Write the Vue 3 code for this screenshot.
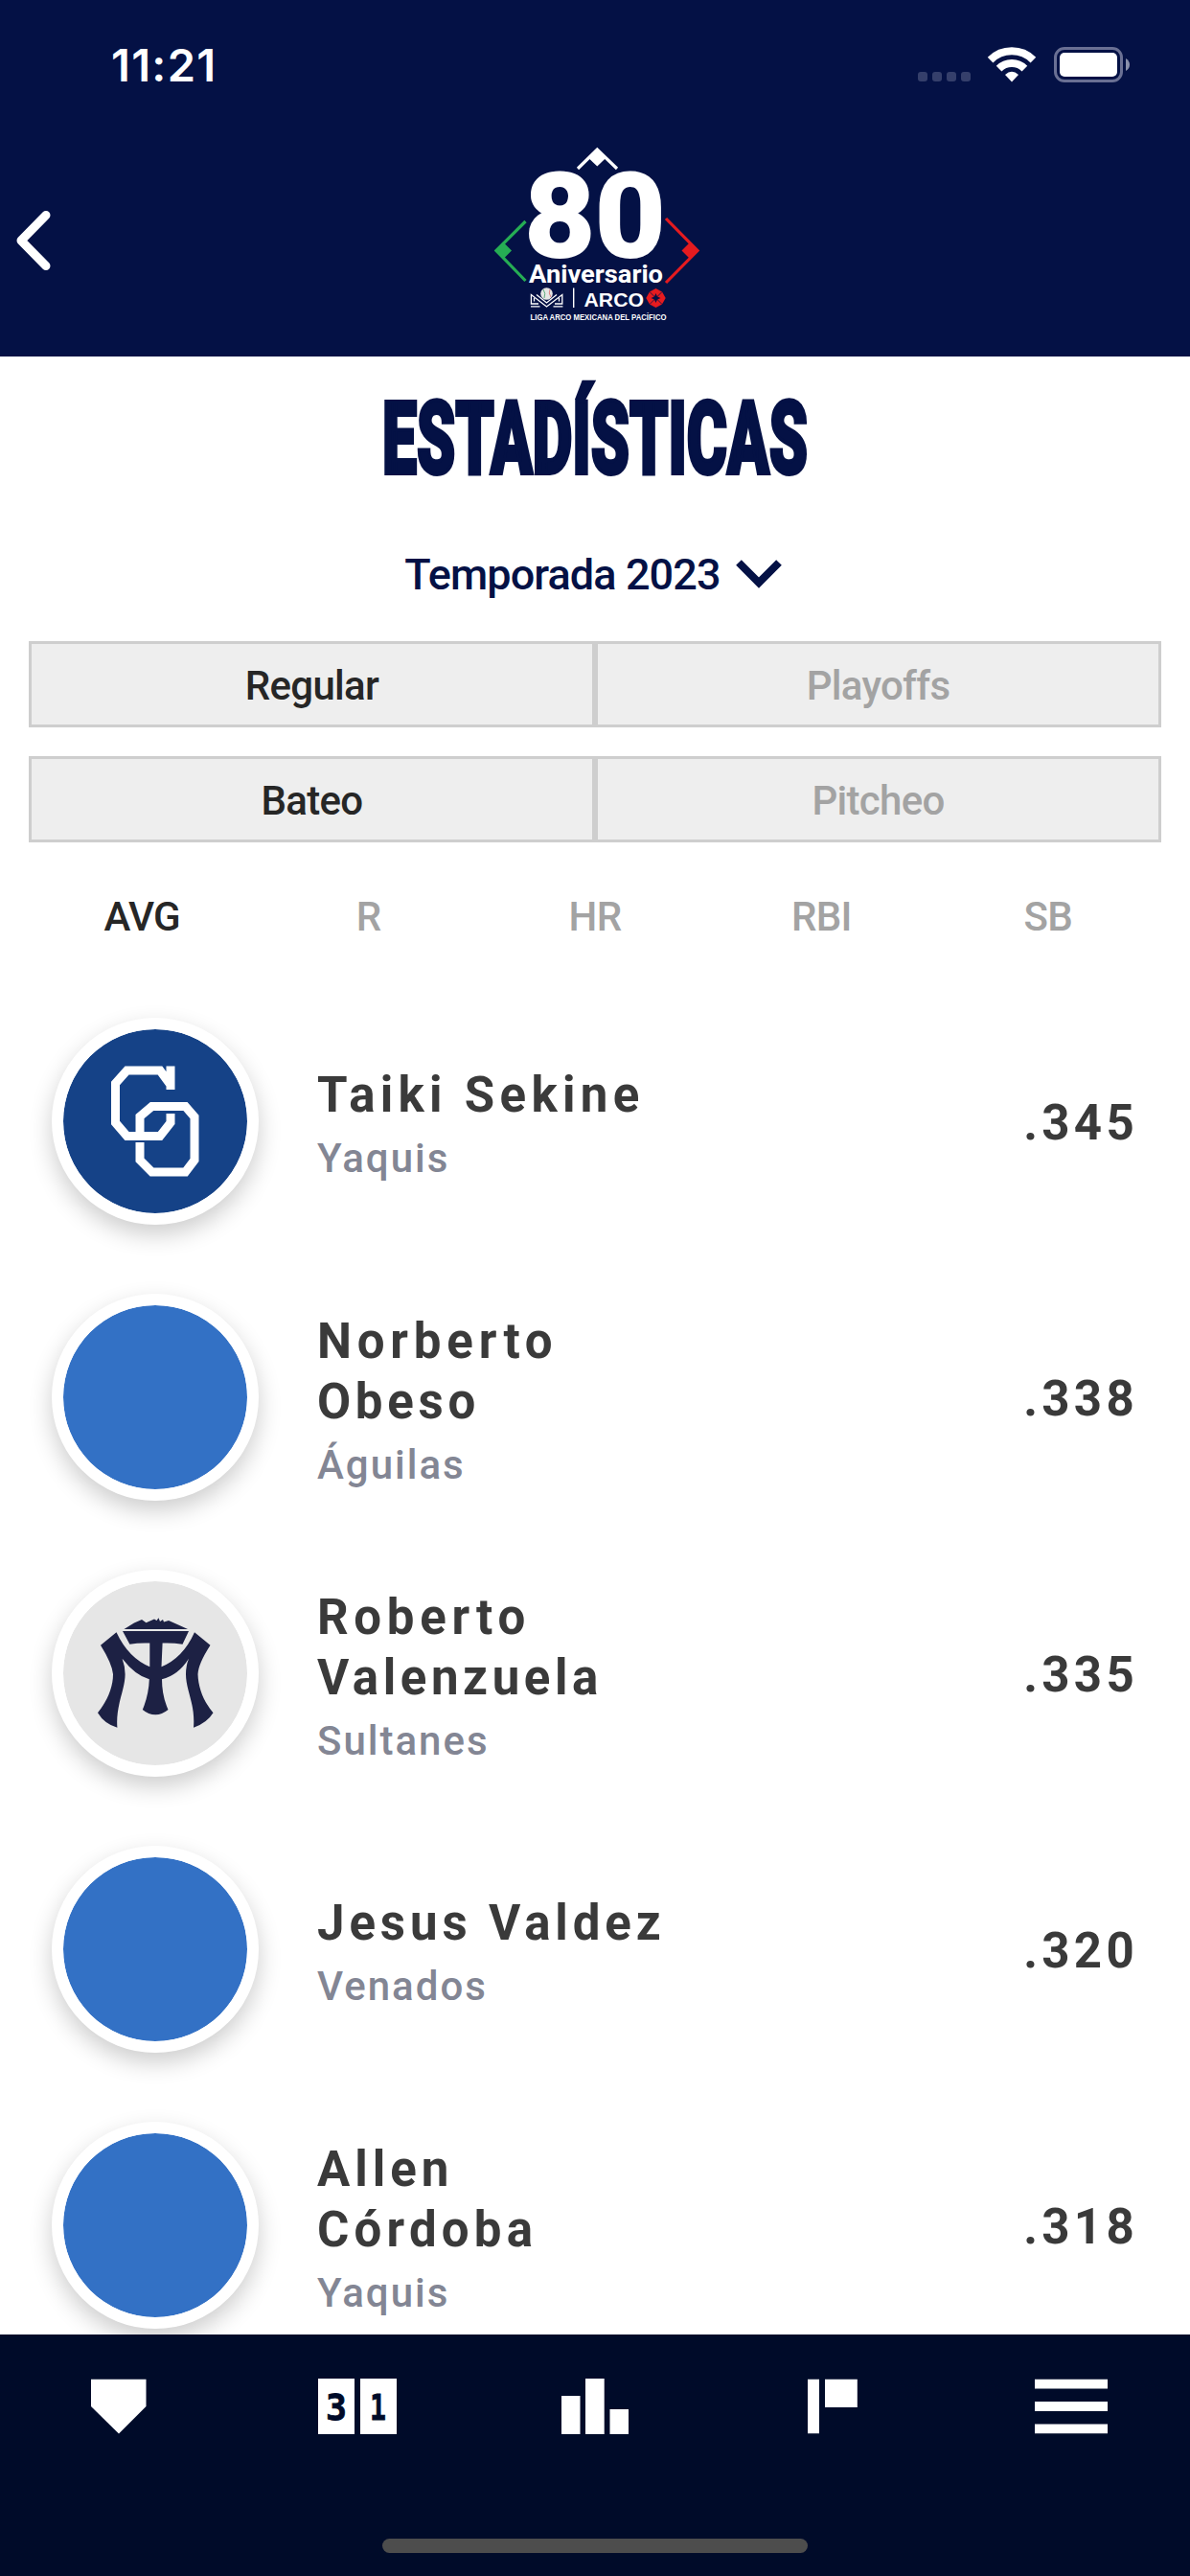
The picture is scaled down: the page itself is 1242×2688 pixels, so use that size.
<template>
  <div class="app">
    <header class="header">
      <div class="status-bar">
        <span class="time">11:21</span>
        <div class="status-icons">
          <svg width="55" height="10" viewBox="0 0 55 10" class="signal">
            <rect v-for="n in 4" :key="n" :x="(n - 1) * 15" width="10" height="10" rx="3" fill="#353f6b" />
          </svg>
          <svg width="50" height="38" viewBox="0 0 50 38" class="wifi">
            <path d="M2.6 13.6A31.7 31.7 0 0 1 47.4 13.6" fill="none" stroke="#fff" stroke-width="8" />
            <path d="M11.6 22.6A18.9 18.9 0 0 1 38.4 22.6" fill="none" stroke="#fff" stroke-width="8" />
            <path d="M25 36.5L18 29Q25 22.5 32 29Z" fill="#fff" />
          </svg>
          <svg width="80" height="38" viewBox="0 0 80 38" class="battery">
            <rect x="1.5" y="1.5" width="69" height="34" rx="9.5" fill="none" stroke="#6a7094" stroke-width="3" />
            <rect x="6" y="6" width="60" height="25" rx="5" fill="#fff" />
            <path d="M75 12q4 2.5 4 6.5t-4 6.5z" fill="#8a90ab" />
          </svg>
        </div>
      </div>
      <div class="nav-top">
        <button class="back" aria-label="Atrás">
          <svg width="60" height="64" viewBox="0 0 60 64">
            <path d="M48 5.5L22 32L48 58.5" fill="none" stroke="#fff" stroke-width="9" stroke-linecap="round" stroke-linejoin="round" />
          </svg>
        </button>
        <svg class="logo" width="240" height="190" viewBox="501 150 240 190">
          <g fill="none" stroke-width="3.2">
            <path d="M603 176L623.3 156L644 176" stroke="#fff" />
            <path d="M548.5 231L518 261.5L548.5 293" stroke="#26ad54" />
            <path d="M695 228L728 261.5L695 295" stroke="#e51b1f" />
          </g>
          <path d="M623.3 154.7L633 164.2L623.3 173.5L613.5 164.2Z" fill="#fff" />
          <path d="M516 261.5L525 252.5L534 261.5L525 270.5Z" fill="#26ad54" />
          <path d="M729.5 261.5L720.5 252.5L711.5 261.5L720.5 270.5Z" fill="#e51b1f" />
          <g fill="#fff">
            <text class="eighty" x="547.5" y="267.5" textLength="147" lengthAdjust="spacingAndGlyphs">80</text>
            <text class="aniversario" x="552" y="294.5" textLength="140" lengthAdjust="spacingAndGlyphs">Aniversario</text>
            <text class="arco" x="609.5" y="320" textLength="62.500" lengthAdjust="spacingAndGlyphs">ARCO</text>
            <text class="liga" x="553.5" y="334.2" textLength="142" lengthAdjust="spacingAndGlyphs">LIGA ARCO MEXICANA DEL PACÍFICO</text>
            <rect x="598" y="300.5" width="1.4" height="20.5" />
          </g>
          <circle cx="570.5" cy="306.5" r="6.3" fill="#e6e6e4" />
          <path d="M567 302q3 4 1 9" fill="none" stroke="#3b9c62" stroke-width=".8" />
          <path d="M574 302q-2 4 1 8" fill="none" stroke="#d66" stroke-width=".8" />
          <path d="M561 307L570.5 316L580 307V314L570.5 321L561 314Z" fill="#041145" />
          <g fill="none" stroke="#fff" stroke-width="1.3">
            <path d="M562 317H554.4V307.5L570.5 320L586.8 307.5V317H579" />
            <path d="M554 319.8H563.5M577.5 319.8H587.4M557.5 314.5V311M583.5 314.5V311" />
            <path d="M560 307.5L570.5 316L581 307.5" />
          </g>
          <path d="M684.5 301L691 304.5L694.7 311L691 317.500L684.5 321L678 317.500L674.3 311L678 304.500Z" fill="#e51b1f" />
          <path d="M678 304.500L691 317.500M691 304.500L678 317.500" stroke="#041145" stroke-width=".8" />
          <path d="M684.5 306L686 309.500L689.500 311L686 312.500L684.5 316L683 312.500L679.500 311L683 309.500Z" fill="#041145" />
        </svg>
      </div>
    </header>

    <main class="content">
      <h1 class="title">
        <svg width="480" height="110" viewBox="381 390 480 110">
          <text x="399" y="493.500" textLength="444" lengthAdjust="spacingAndGlyphs">ESTADÍSTICAS</text>
        </svg>
      </h1>

      <button class="season">
        <span>Temporada 2023</span>
        <svg width="48" height="30" viewBox="0 0 48 30">
          <path d="M3 3L24 24L45 3" fill="none" stroke="#041145" stroke-width="8" />
        </svg>
      </button>

      <div v-for="(group, i) in toggles" :key="i" class="toggle">
        <button v-for="(label, j) in group" :key="label" :class="{ active: j === 0 }">{{ label }}</button>
      </div>

      <div class="tabs">
        <button v-for="tab in tabs" :key="tab" :class="{ active: tab === current }" @click="current = tab">{{ tab }}</button>
      </div>

      <ul class="players">
        <li v-for="player in players" :key="player.value" class="player">
          <div class="avatar" :class="player.badge">
            <svg v-if="player.badge === 'co'" viewBox="0 0 192 192">
              <g fill="none" stroke="#fff" stroke-width="9" stroke-linejoin="miter">
                <path d="M112 38.5V63M112 58L101 43H66.500L54.500 56.500V97.500L66.500 111.500H101L112 97.500V88" />
                <path d="M80 112V91L92.500 80.500H127.500L137 91.500V136.500L127.500 149H92.500L80 136.500V118" />
              </g>
            </svg>
            <svg v-if="player.badge === 'mty'" viewBox="0 0 192 192">
              <g fill="#1d2144">
                <path d="M63.500 50L74 43.500L82 40L86.500 43.300L95 39.500L97.500 41L99.500 38.300L101 42L104 40L105 42.500L110 41L119 45L130 50Z" />
                <path d="M62 52H131L124.500 65.700Q114 64 103.600 64.500L102.500 89.300Q125 80 137 53.300L153.500 66.700Q141 86 140.500 97C141 112 147 126 156.500 137.300Q150 148 136 152.700C138 128 128 114 128 97Q128 88 131 80.700Q120 98 103 102.300C103 113 105 124 109.500 134Q103 139.300 96.300 139.300Q89 139.300 82.800 134C87 124 89.500 113 89.800 102.300Q75 98 61.600 80.700Q64.600 89 64.600 97C64.600 113 54.500 130 56.400 152.700Q43 149 36 137.300C45 126 52 112 52 97Q51 86 39 66.700L55.500 53.300Q68 80 90.300 89.300V64.500Q79 64 69.400 65.700Z" />
              </g>
            </svg>
          </div>
          <div class="info">
            <p class="name">
              <span v-for="line in player.name" :key="line.text" :style="{ letterSpacing: line.spacing + 'px' }">{{ line.text }}</span>
            </p>
            <p class="team">{{ player.team }}</p>
          </div>
          <span class="value">{{ player.value }}</span>
        </li>
      </ul>
    </main>

    <nav class="bottom">
      <div class="bottom-items">
        <svg width="58" height="58" viewBox="0 0 58 58" class="plate">
          <path d="M0 .7H57.500V29L29 57.500L0 29Z" fill="#fff" />
        </svg>
        <svg width="82" height="58" viewBox="0 0 82 58">
          <path d="M0 0H38V58H0ZM44 0H82V58H44Z" fill="#fff" />
          <text class="digit" x="8" y="42.500" textLength="22" lengthAdjust="spacingAndGlyphs">3</text>
          <text class="digit" x="54" y="42.500" textLength="17" lengthAdjust="spacingAndGlyphs">1</text>
        </svg>
        <svg width="70" height="58" viewBox="0 0 70 58">
          <path d="M0 18H19.500V58H0ZM25 0H44.700V58H25ZM50.500 32H70V58H50.500Z" fill="#fff" />
        </svg>
        <svg width="52" height="58" viewBox="0 0 52 58">
          <path d="M0 .7H12V57.300H0ZM18 .7H51.800V30H18Z" fill="#fff" />
        </svg>
        <svg width="76" height="58" viewBox="0 0 76 58">
          <path d="M0 .7H76V10.500H0ZM0 24H76V34H0ZM0 47.500H76V57.300H0Z" fill="#fff" />
        </svg>
      </div>
      <div class="home-indicator"></div>
    </nav>
  </div>
</template>

<script setup>
import { ref } from 'vue';

const toggles = [
  ['Regular', 'Playoffs'],
  ['Bateo', 'Pitcheo'],
];

const tabs = ['AVG', 'R', 'HR', 'RBI', 'SB'];
const current = ref('AVG');

const players = [
  { name: [{ text: 'Taiki Sekine', spacing: 5.3 }], team: 'Yaquis', value: '.345', badge: 'co' },
  {
    name: [{ text: 'Norberto', spacing: 5.8 }, { text: 'Obeso', spacing: 4.7 }],
    team: 'Águilas',
    value: '.338',
    badge: '',
  },
  {
    name: [{ text: 'Roberto', spacing: 5.7 }, { text: 'Valenzuela', spacing: 4.6 }],
    team: 'Sultanes',
    value: '.335',
    badge: 'mty',
  },
  { name: [{ text: 'Jesus Valdez', spacing: 4.9 }], team: 'Venados', value: '.320', badge: '' },
  {
    name: [{ text: 'Allen', spacing: 5 }, { text: 'Córdoba', spacing: 5.2 }],
    team: 'Yaquis',
    value: '.318',
    badge: '',
  },
];
</script>

<style>
body {
  margin: 0;
  overflow: hidden;
}
</style>

<style scoped>
.app {
  width: 1242px;
  height: 2688px;
  display: flex;
  flex-direction: column;
  overflow: hidden;
  background: #fff;
  font-family: Roboto, "Liberation Sans", sans-serif;
}

button {
  padding: 0;
  border: none;
  background: none;
  font: inherit;
}

svg {
  display: block;
  overflow: visible;
}

.header {
  height: 372px;
  flex: none;
  background: #041145;
}

.status-bar {
  height: 132px;
  display: flex;
  justify-content: space-between;
  box-sizing: border-box;
  padding: 40px 62px 0 116px;
}

.time {
  font: 600 47px/56px Inter, sans-serif;
  letter-spacing: 1.3px;
  color: #fff;
}

.status-icons {
  display: flex;
  padding-top: 9px;
}

.signal {
  margin: 26px 18px 0 0;
}

.wifi {
  margin-right: 19px;
}

.nav-top {
  height: 240px;
  display: grid;
  grid-template-columns: 501px 240px 1fr;
}

.back {
  height: 64px;
  margin-top: 87px;
  width: 60px;
}

.logo {
  margin-top: 18px;
}

.eighty {
  font: 800 122px Roboto, sans-serif;
  stroke: #fff;
  stroke-width: 2;
}

.aniversario {
  font: 700 25.5px Roboto, sans-serif;
}

.arco {
  font: 700 21px "Liberation Sans", sans-serif;
}

.liga {
  font: 700 9px "Liberation Sans", sans-serif;
}

.content {
  height: 2064px;
  flex: none;
  overflow: hidden;
}

.title {
  margin: 18px 0 0;
  display: flex;
  justify-content: center;
}

.title text {
  font: 900 105px Roboto, sans-serif;
  fill: #041145;
  stroke: #041145;
  stroke-width: 4;
}

.season {
  height: 64px;
  margin: 67px auto 38px;
  padding-right: 4px;
  display: flex;
  align-items: center;
  justify-content: center;
  gap: 16px;
  font-size: 45px;
  font-weight: 500;
  letter-spacing: -0.9px;
  color: #041145;
}

.toggle {
  display: grid;
  grid-template-columns: 1fr 1fr;
  height: 90px;
  margin: 0 30px 30px;
}

.toggle button {
  padding-top: 3px;
  border: 3px solid #cecece;
  background: #eee;
}

.toggle button,
.tabs button {
  font-size: 42px;
  font-weight: 500;
  letter-spacing: -0.7px;
  color: #a3a3a3;
}

.toggle button.active,
.tabs button.active {
  color: #262626;
}

.tabs {
  display: grid;
  grid-template-columns: repeat(5, 1fr);
  height: 90px;
  margin: 32px 30px 0;
}

.players {
  margin: 25px 0 0;
  padding: 0;
  list-style: none;
}

.player {
  display: flex;
  align-items: center;
  height: 288px;
  padding: 0 54px;
}

.avatar {
  width: 192px;
  height: 192px;
  flex: none;
  margin-right: 61px;
  border: 12px solid #fff;
  border-radius: 50%;
  background: #3371c5;
  background-clip: padding-box;
  box-shadow: 0 10px 24px rgba(0, 0, 0, 0.2);
}

.avatar.co {
  background-color: #154287;
}

.avatar.mty {
  background-color: #e6e6e6;
}

.info {
  flex: 1;
  padding-top: 7px;
}

.info p {
  margin: 0;
}

.name {
  font-size: 51px;
  font-weight: 700;
  line-height: 63px;
  color: #3a3a3a;
}

.name span {
  display: block;
}

.info .team {
  padding-top: 7px;
  font-size: 42px;
  font-weight: 500;
  line-height: 55px;
  letter-spacing: 2px;
  color: #838694;
}

.value {
  padding-top: 3px;
  font-size: 51px;
  font-weight: 700;
  letter-spacing: 4.3px;
  color: #3a3a3a;
}

.bottom {
  height: 252px;
  flex: none;
  display: flex;
  flex-direction: column;
  justify-content: space-between;
  align-items: center;
  background: #000b29;
}

.bottom-items {
  width: 100%;
  display: grid;
  grid-template-columns: repeat(5, 1fr);
  justify-items: center;
  padding-top: 46px;
}

.digit {
  font: 700 38px "DejaVu Sans Mono", monospace;
  fill: #000b29;
  stroke: #000b29;
  stroke-width: 0.8;
}

.home-indicator {
  width: 444px;
  height: 15px;
  margin-bottom: 24px;
  border-radius: 8px;
  background: #4d4d4d;
}
</style>
